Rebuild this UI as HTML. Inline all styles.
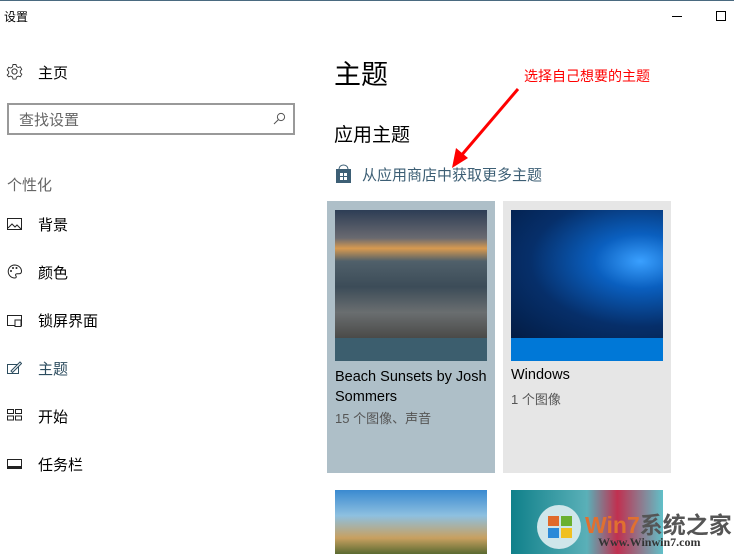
<!DOCTYPE html><html><head><meta charset="utf-8"><style>
body{margin:0;width:734px;height:554px;overflow:hidden;background:#fff;font-family:"Liberation Sans","Noto Sans CJK SC",sans-serif;position:relative}
.a{position:absolute}
.nav{position:absolute;left:38px;font-size:15px;color:#000}
.ic{position:absolute;left:7px;width:15px;height:12px}
</style></head><body>
<div class="a" style="left:0;top:0;width:734px;height:1px;background:#4a6a80"></div>
<div class="a" style="left:4px;top:8px;font-size:12px">设置</div>
<div class="a" style="left:672px;top:16px;width:10px;height:1px;background:#000"></div>
<div class="a" style="left:716px;top:11px;width:8px;height:8px;border:1px solid #000"></div>
<svg class="a" style="left:6px;top:63px" width="17" height="17" viewBox="0 0 17 17"><circle cx="8.5" cy="8.5" r="2.6" fill="none" stroke="#333"/><path d="M7 1.5h3l.5 2 1.8 1 2-.7 1.5 2.6-1.5 1.4v2l1.5 1.4-1.5 2.6-2-.7-1.8 1-.5 2H7l-.5-2-1.8-1-2 .7L1.2 12l1.5-1.4v-2L1.2 6.9l1.5-2.6 2 .7 1.8-1z" fill="none" stroke="#333" stroke-width="0.9"/></svg>
<div class="nav" style="top:62px">主页</div>
<div class="a" style="left:7px;top:103px;width:284px;height:28px;border:2px solid #999"></div>
<div class="a" style="left:19px;top:109px;font-size:15px;color:#666">查找设置</div>
<svg class="a" style="left:273px;top:112px" width="13" height="13"><circle cx="8" cy="5" r="3.6" fill="none" stroke="#555"/><path d="M5.4 7.6L1 12" stroke="#555"/></svg>
<div class="a" style="left:7px;top:174px;font-size:15px;color:#666">个性化</div>
<svg class="ic" style="top:218px" viewBox="0 0 15 12"><rect x=".5" y=".5" width="14" height="11" fill="none" stroke="#222"/><path d="M1 10l4-4 3 3 2-2 4 4" fill="none" stroke="#222"/></svg>
<div class="nav" style="top:214px">背景</div>
<svg class="ic" style="top:264px;height:15px" viewBox="0 0 15 15"><path d="M7.5 1A6.5 6.5 0 1 0 8 14c1.5 0 1.5-1.5.8-2.3-.7-.8 0-2 1.2-2H12c1.5 0 2.5-1 2.5-2.5C14.5 3.5 11 1 7.5 1z" fill="none" stroke="#222"/><circle cx="4" cy="7" r="1" fill="#222"/><circle cx="6" cy="4" r="1" fill="#222"/><circle cx="9.5" cy="4" r="1" fill="#222"/></svg>
<div class="nav" style="top:262px">颜色</div>
<svg class="ic" style="top:315px" viewBox="0 0 15 12"><rect x=".5" y=".5" width="14" height="10" fill="none" stroke="#222"/><rect x="8" y="5" width="6" height="6.5" fill="#fff" stroke="#222"/></svg>
<div class="nav" style="top:310px">锁屏界面</div>
<svg class="ic" style="top:361px;height:14px" viewBox="0 0 15 14"><rect x=".5" y="3.5" width="11" height="9" fill="none" stroke="#2d4d5f"/><path d="M4 10l9-9 1.5 1.5-9 9z" fill="#fff" stroke="#2d4d5f"/></svg>
<div class="nav" style="top:358px;color:#2d4d5f">主题</div>
<svg class="ic" style="top:409px" viewBox="0 0 15 12"><rect x=".5" y=".5" width="6" height="4" fill="none" stroke="#222"/><rect x="8.5" y=".5" width="6" height="4" fill="none" stroke="#222"/><rect x=".5" y="7" width="6" height="4" fill="none" stroke="#222"/><rect x="8.5" y="7" width="6" height="4" fill="none" stroke="#222"/></svg>
<div class="nav" style="top:406px">开始</div>
<svg class="ic" style="top:459px" viewBox="0 0 15 12"><rect x=".5" y=".5" width="14" height="9" fill="none" stroke="#222"/><rect x="1" y="7" width="13" height="2" fill="#222"/></svg>
<div class="nav" style="top:454px">任务栏</div>

<div class="a" style="left:334px;top:53px;font-size:27px">主题</div>
<div class="a" style="left:524px;top:66px;font-size:14px;color:#f00">选择自己想要的主题</div>
<div class="a" style="left:334px;top:120px;font-size:19px">应用主题</div>
<svg class="a" style="left:335px;top:164px" width="17" height="20"><path d="M4 5a4.5 4 0 0 1 9 0" fill="none" stroke="#3d5f75"/><rect x="1" y="5" width="15" height="14" fill="#3d5f75"/><rect x="5" y="9" width="3" height="3" fill="#fff"/><rect x="9" y="9" width="3" height="3" fill="#fff"/><rect x="5" y="13" width="3" height="3" fill="#fff"/><rect x="9" y="13" width="3" height="3" fill="#fff"/></svg>
<div class="a" style="left:362px;top:164px;font-size:15px;color:#3d5f75">从应用商店中获取更多主题</div>
<svg class="a" style="left:440px;top:85px" width="90" height="90"><path d="M78 4L20 72" stroke="#f00" stroke-width="3"/><path d="M12 83L16 63 28 73z" fill="#f00"/></svg>

<div class="a" style="left:327px;top:201px;width:168px;height:272px;background:#aebfc8"></div>
<div class="a" style="left:335px;top:210px;width:152px;height:128px;background:linear-gradient(180deg,#2d3d55 0%,#6a6a70 22%,#d89a50 30%,#50606a 40%,#3c4c58 60%,#6a6e70 80%,#4a4a48 100%)"></div>
<div class="a" style="left:335px;top:338px;width:152px;height:23px;background:#3c5e6e"></div>
<div class="a" style="left:335px;top:367px;font-size:14.5px;line-height:20px;width:160px">Beach Sunsets by Josh Sommers</div>
<div class="a" style="left:335px;top:408px;font-size:13px;color:#555">15 个图像、声音</div>

<div class="a" style="left:503px;top:201px;width:168px;height:272px;background:#e6e6e6"></div>
<div class="a" style="left:511px;top:210px;width:152px;height:128px;background:radial-gradient(ellipse at 85% 40%,#3aa0ff 0%,#0a5fbf 25%,#062f6a 60%,#031c44 100%)"></div>
<div class="a" style="left:511px;top:338px;width:152px;height:23px;background:#0078d7"></div>
<div class="a" style="left:511px;top:367px;font-size:14.5px">Windows</div>
<div class="a" style="left:511px;top:389px;font-size:13px;color:#555">1 个图像</div>

<div class="a" style="left:335px;top:490px;width:152px;height:64px;background:linear-gradient(180deg,#3a8ad0,#8ec0e0 40%,#c8a060 75%,#5a6a30)"></div>
<div class="a" style="left:511px;top:490px;width:152px;height:64px;background:linear-gradient(90deg,#10808a,#5ab0b8 50%,#c03050 70%,#60c0c8)"></div>
<div class="a" style="left:537px;top:505px;width:44px;height:44px;border-radius:50%;background:#cfe6ea"></div>
<svg class="a" style="left:547px;top:514px" width="26" height="26"><rect x="1" y="2" width="11" height="10" fill="#e06a2a"/><rect x="14" y="2" width="11" height="10" fill="#6ab030"/><rect x="1" y="14" width="11" height="10" fill="#2a8ad8"/><rect x="14" y="14" width="11" height="10" fill="#f0c020"/></svg>
<div class="a" style="left:585px;top:506px;font-size:23px;font-weight:bold;color:#e07030">Win7<span style="color:#555">系统之家</span></div>
<div class="a" style="left:598px;top:535px;font-size:12px;font-family:'Liberation Serif',serif;font-weight:bold;color:#333">Www.Winwin7.com</div>
</body></html>
